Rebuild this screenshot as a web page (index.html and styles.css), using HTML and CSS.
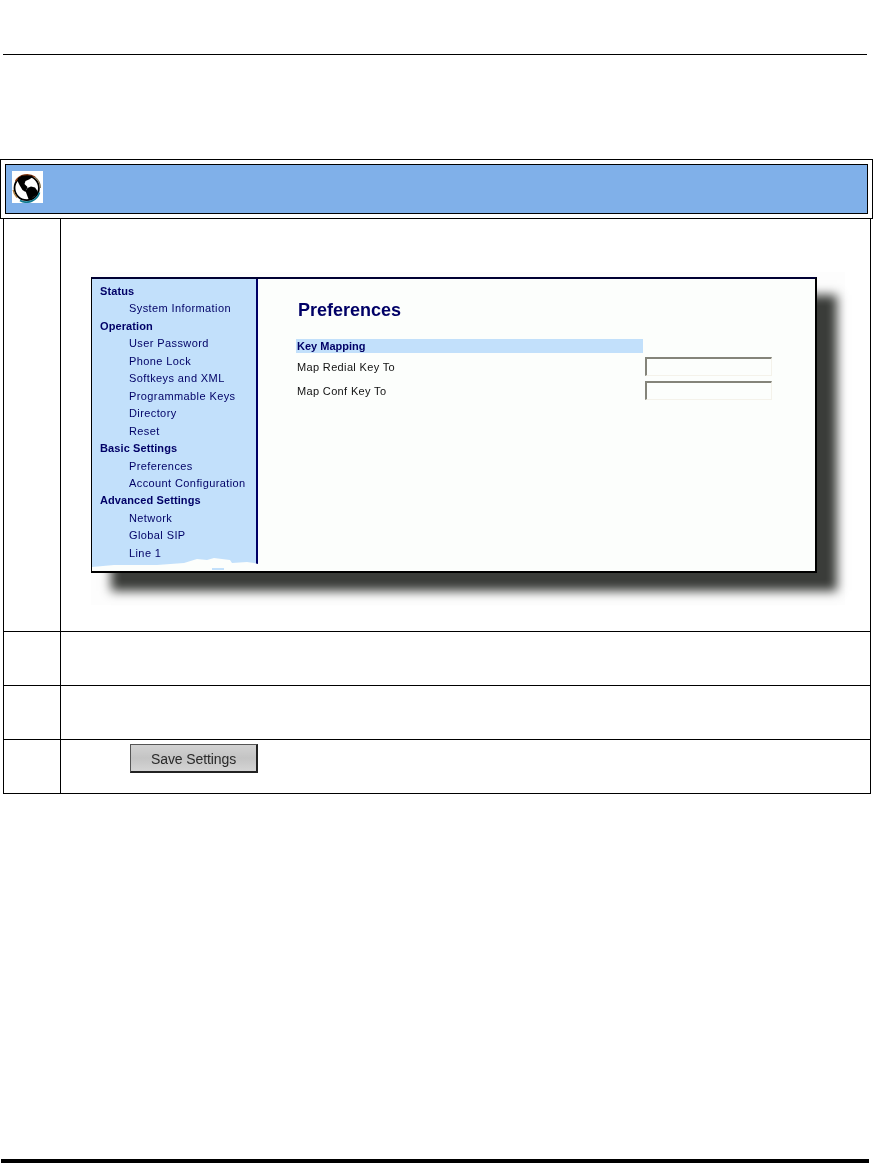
FILE: index.html
```html
<!DOCTYPE html>
<html lang="en">
<head>
<meta charset="utf-8">
<title>Preferences</title>
<link rel="stylesheet" href="styles.css">
</head>
<body>
<div class="page">
  <hr class="top-rule">
  <div class="banner">
    <div class="banner-inner">
      <svg class="globe" viewBox="0 0 31 32" width="31" height="32" aria-hidden="true">
        <rect width="31" height="32" fill="#fff"/>
        <circle cx="14.7" cy="17" r="12.2" fill="#fff" stroke="#000" stroke-width="1.8"/>
        <path d="M3.6 10 A13.6 13.6 0 0 1 23 6.2" fill="none" stroke="#8a3a12" stroke-width="1.5"/>
        <path d="M1.2 19 A13.6 13.6 0 0 0 5 26.5" fill="none" stroke="#b08040" stroke-width="1.4"/>
        <path d="M8 29.5 A13.6 13.6 0 0 0 27.5 21.5" fill="none" stroke="#107a90" stroke-width="1.7"/>
        <path d="M23 6.2 A13.6 13.6 0 0 1 28.4 17" fill="none" stroke="#807050" stroke-width="1.2"/>
        <path d="M6 7 L10 4.5 L20 4.5 L21 6 L17 8.5 L13.5 10 L12.5 13 L15.5 16 L13.5 21 L10.5 19 L7.5 14 L5.5 10 Z" fill="#000"/>
        <path d="M13.5 20 L15.5 17 L19 15.5 L23 16.5 L25.5 20 L25.5 23 L21.5 26 L18.5 29 L16.5 28 L15 24 Z" fill="#000"/>
      </svg>
    </div>
  </div>
  <div class="steps">
    <div class="step step-shot">
      <div class="num"></div>
      <div class="body">
        <div class="shot">
          <div class="frame">
            <div class="side">
              <ul class="nav">
                <li class="head">Status</li>
                <li>System Information</li>
                <li class="head">Operation</li>
                <li>User Password</li>
                <li>Phone Lock</li>
                <li>Softkeys and XML</li>
                <li>Programmable Keys</li>
                <li>Directory</li>
                <li>Reset</li>
                <li class="head">Basic Settings</li>
                <li>Preferences</li>
                <li>Account Configuration</li>
                <li class="head">Advanced Settings</li>
                <li>Network</li>
                <li>Global SIP</li>
                <li>Line 1</li>
              </ul>
              <svg class="torn" viewBox="0 0 166 15" width="166" height="15" aria-hidden="true">
                <rect x="164" y="0" width="2" height="8" fill="#000066"/>
                <path d="M0 11 L22 9 L65 9 L92 7 L105 3 L115 4 L122 2 L138 4 L140 7 L155 6 L162 7 L166 8 L166 15 L0 15 Z" fill="#fcfefc"/>
                <rect x="120" y="12" width="12" height="2" fill="#c2e0fb"/>
              </svg>
            </div>
            <div class="main">
              <h1 class="title">Preferences</h1>
              <div class="section">Key Mapping</div>
              <div class="row"><span class="label">Map Redial Key To</span><input class="field" type="text"></div>
              <div class="row"><span class="label">Map Conf Key To</span><input class="field" type="text"></div>
            </div>
          </div>
        </div>
      </div>
    </div>
    <div class="step step-plain"><div class="num"></div><div class="body"></div></div>
    <div class="step step-plain"><div class="num"></div><div class="body"></div></div>
    <div class="step step-plain">
      <div class="num"></div>
      <div class="body body-btn"><span class="save">Save Settings</span></div>
    </div>
  </div>
  <div class="spacer"></div>
  <div class="bottom-bar"></div>
</div>
</body>
</html>
```
FILE: styles.css
```css
* { box-sizing: border-box; }
html, body { margin: 0; padding: 0; background: #fff; }
.page {
  width: 873px;
  height: 1163px;
  display: flex;
  flex-direction: column;
  overflow: hidden;
  font-family: "Liberation Sans", Arial, sans-serif;
}
.top-rule {
  margin: 54px 0 0 3px;
  width: 864px;
  height: 1px;
  border: 0;
  background: #000;
  flex: none;
}
.banner {
  margin-top: 104px;
  width: 873px;
  height: 60px;
  border: 1px solid #000;
  padding: 4px;
  flex: none;
}
.banner-inner {
  width: 863px;
  height: 50px;
  border: 1px solid #000;
  background: #80b0e9;
  padding: 6px 0 0 6px;
}
.globe { display: block; }
.steps {
  margin-left: 3px;
  width: 868px;
  border-left: 1px solid #000;
  border-right: 1px solid #000;
  flex: none;
}
.step {
  display: flex;
  border-bottom: 1px solid #000;
}
.step-shot { height: 413px; }
.step-plain { height: 54px; }
.num {
  width: 57px;
  border-right: 1px solid #000;
  flex: none;
}
.body { flex: 1; }
.shot {
  margin: 53px 0 0 30px;
  width: 754px;
  height: 333px;
  padding-top: 5px;
  background: #fdfdfd;
}
.frame {
  width: 726px;
  height: 296px;
  display: flex;
  border: 1px solid #000;
  border-top: 2px solid #000033;
  border-bottom: 2px solid #000;
  border-right: 2px solid #000;
  background: #fcfefc;
  box-shadow: 20px 18px 10px #3a3c39;
}
.side {
  width: 166px;
  flex: none;
  display: flex;
  flex-direction: column;
  background: #c2e0fb;
}
.nav {
  list-style: none;
  margin: 0;
  padding: 4px 0 0 8px;
  flex: 1;
  min-height: 0;
  border-right: 2px solid #000066;
  font-size: 11px;
  letter-spacing: 0.4px;
  line-height: 17.45px;
  color: #000066;
  filter: blur(0.3px);
}
.nav li { padding-left: 29px; white-space: nowrap; }
.nav .head {
  padding-left: 0;
  font-weight: bold;
  letter-spacing: 0.1px;
}
.torn { display: block; flex: none; }
.main {
  flex: 1;
  padding: 0 0 0 38px;
  color: #111;
}
.title {
  margin: 20px 0 18px 2px;
  font-size: 18px;
  line-height: 22px;
  font-weight: bold;
  color: #000066;
  filter: blur(0.3px);
}
.section {
  width: 347px;
  height: 14px;
  background: #c2e0fb;
  color: #000066;
  font-size: 11px;
  font-weight: bold;
  line-height: 15px;
  padding-left: 1px;
  filter: blur(0.2px);
}
.row {
  display: flex;
  align-items: center;
  justify-content: space-between;
  width: 476px;
  height: 19px;
  margin-top: 5px;
  font-size: 11px;
  letter-spacing: 0.35px;
  padding-left: 1px;
}
.section + .row { margin-top: 4px; }
.label { filter: blur(0.3px); }
.field {
  width: 127px;
  height: 19px;
  padding: 0;
  background: #fcfefc;
  border-style: solid;
  border-width: 2px 1px 1px 2px;
  border-color: #84847a #f4f2ea #f4f2ea #84847a;
}
.body-btn { padding: 4px 0 0 69px; }
.save {
  display: block;
  width: 128px;
  height: 29px;
  background: linear-gradient(#d2d2d2, #c4c4c4 50%, #d4d4d4);
  border: 1px solid #555;
  border-right: 2px solid #222;
  border-bottom: 2px solid #222;
  color: #2a2a2a;
  font-size: 14px;
  letter-spacing: -0.1px;
  line-height: 28px;
  text-align: center;
  filter: blur(0.5px);
}
.spacer { flex: 1; }
.bottom-bar {
  margin-left: 1px;
  width: 868px;
  height: 4px;
  background: #000;
  flex: none;
}
```
